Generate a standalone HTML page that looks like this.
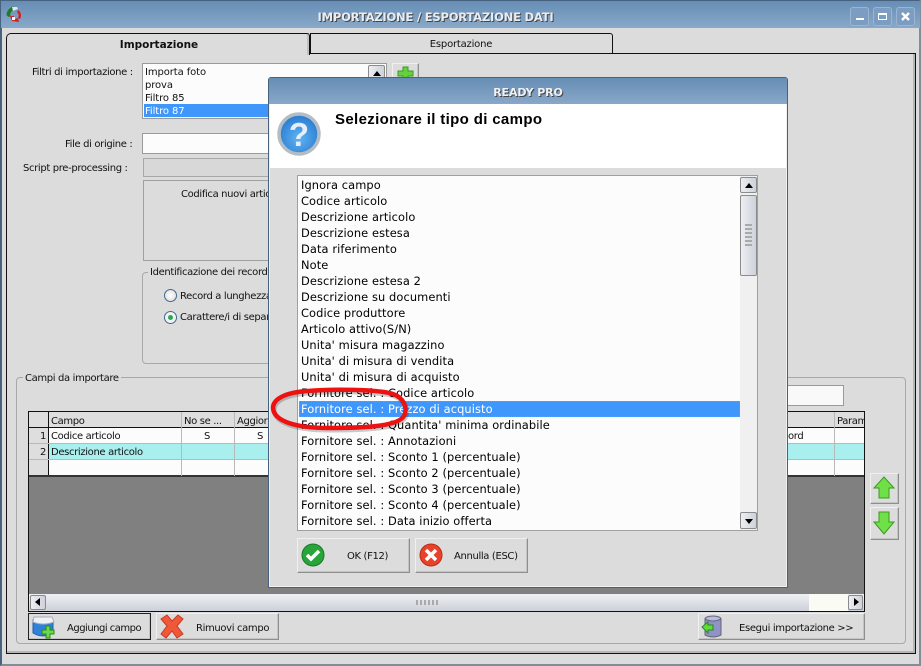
<!DOCTYPE html>
<html><head><meta charset="utf-8"><style>
html,body{margin:0;padding:0;width:921px;height:666px;overflow:hidden;background:#dcdcdc;font-family:"DejaVu Sans","Liberation Sans",sans-serif;font-size:10px;color:#111}
div,span,svg{position:absolute;box-sizing:border-box}
.t{white-space:nowrap;line-height:16px;height:16px;letter-spacing:-.35px;margin-top:1px}
.f{letter-spacing:-.1px}
.tb{background:linear-gradient(#678db5,#88a8c8)}
.btn{background:#dcdcdc;border:1px solid;border-color:#f0f0f0 #8e8e8e #8e8e8e #f0f0f0;box-shadow:inset -1px -1px 0 #c4c4c4}
.wb{top:7px;width:19px;height:19px;border:1px solid #9bb5d0;border-radius:3px;background:#7b9dc1}
.sb{background:linear-gradient(90deg,#eceef2,#cfd2db);border:1px solid #8b8b8b;border-radius:2px}
.row{left:301px;font-size:11.4px;color:#000;letter-spacing:.1px;margin-top:0}
.g{background:#b9b9b9}
</style></head><body>
<div style="left:0;top:0;width:921px;height:666px;border:1px solid #46627f;border-width:1px 2px 2px 2px;border-color:#46627f #7f8d9b #7f8d9b #46627f"></div>
<div class="tb" style="left:1px;top:1px;width:919px;height:27px"></div>
<svg style="left:6px;top:6px" width="16" height="17" viewBox="0 0 16 17"><path d="M8 0.5C4 1 1 4 0.5 9l2 2 2-1C4 7 5 5 8 4z" fill="#1f7a2c"/><path d="M6 1l5 0 1 2-5 2z" fill="#e4e4e4"/><path d="M12 4c3 2 4 6 2 9l-2-1c1-2 1-4-1-6z" fill="#e01818"/><path d="M4 10l2 5 7 1-1-4-3 1-1-3z" fill="#d82020"/><path d="M6 11h3v3H6z" fill="#fff"/></svg>
<div class="t" style="left:0;width:871px;top:8px;text-align:center;font:bold 11.5px/16px 'DejaVu Sans',sans-serif;letter-spacing:-.2px;color:#e8edf3;text-shadow:1px 1px 0 #444">IMPORTAZIONE / ESPORTAZIONE DATI</div>
<div class="wb" style="left:850px"><div style="left:5px;top:10px;width:8px;height:2px;background:#fff"></div></div>
<div class="wb" style="left:873px"><div style="left:4px;top:5px;width:9px;height:7px;border:1px solid #fff;border-top-width:2px"></div></div>
<div class="wb" style="left:896px"><svg style="left:4px;top:4px" width="9" height="9"><path d="M1 1l7 7M8 1L1 8" stroke="#fff" stroke-width="2.4"/></svg></div>

<!-- tab panel -->
<div style="left:6px;top:53px;width:910px;height:601px;border:1px solid #111;box-shadow:inset -2px -2px 0 #b5b5b5"></div>
<div style="left:6px;top:33px;width:304px;height:22px;background:#dcdcdc;border:1px solid #111;border-bottom:0;border-radius:5px 3px 0 0;box-shadow:inset -2px 0 0 #c0c0c0"></div>
<div style="left:310px;top:33px;width:303px;height:21px;background:#dcdcdc;border:1px solid #111;border-radius:0 3px 0 0"></div>
<div class="t" style="left:7px;width:304px;top:36px;text-align:center;font-weight:bold;font-size:10.5px;letter-spacing:0">Importazione</div>
<div class="t" style="left:310px;width:302px;top:36px;text-align:center;letter-spacing:-.2px">Esportazione</div>

<!-- left form -->
<div class="t" style="left:32px;top:64px">Filtri di importazione :</div>
<div style="left:142px;top:63px;width:245px;height:56px;background:#fcfcfc;border:1px solid #9a9a9a"></div>
<div class="t f" style="left:145px;top:64px">Importa foto</div>
<div class="t f" style="left:145px;top:77px">prova</div>
<div class="t f" style="left:145px;top:90px">Filtro 85</div>
<div style="left:144px;top:104px;width:240px;height:13px;background:#3f97fb"></div>
<div class="t f" style="left:145px;top:103px;color:#fff">Filtro 87</div>
<div class="sb" style="left:368px;top:65px;width:17px;height:16px"><div style="left:4px;top:5px;border:4px solid transparent;border-bottom:5px solid #000;border-top:0"></div></div>
<div class="btn" style="left:392px;top:63px;width:27px;height:24px"></div>
<svg style="left:397px;top:66px" width="18" height="16"><path d="M6 1h5v4h5v5h-5v5H6v-5H1V5h5z" fill="#63d23e" stroke="#3a9a22"/></svg>
<div class="t" style="left:65px;top:136px">File di origine :</div>
<div style="left:142px;top:133px;width:140px;height:21px;background:#fcfcfc;border:1px solid #9a9a9a"></div>
<div class="t" style="left:23px;top:160px">Script pre-processing :</div>
<div style="left:143px;top:158px;width:140px;height:19px;background:#d8d8d8;border:1px solid #a8a8a8"></div>
<div style="left:143px;top:180px;width:140px;height:81px;border:1px solid #a0a0a0;border-width:1px 0 1px 1px"></div>
<div class="t" style="left:181px;top:186px">Codifica nuovi articoli</div>
<div style="left:142px;top:272px;width:140px;height:92px;border:1px solid #a8a8a8;border-radius:4px"></div>
<div class="t" style="left:148px;top:264px;background:#dcdcdc;padding:0 2px;width:135px">Identificazione dei record</div>
<div style="left:164px;top:289px;width:13px;height:13px;border-radius:50%;border:1px solid #3f6a94;background:radial-gradient(#fff,#d8d8d8)"></div>
<div class="t" style="left:180px;top:288px;width:90px;overflow:hidden">Record a lunghezza</div>
<div style="left:164px;top:311px;width:13px;height:13px;border-radius:50%;border:1px solid #3f6a94;background:#f2f2f2"><div style="left:3px;top:3px;width:5px;height:5px;border-radius:50%;background:#2fa84f"></div></div>
<div class="t" style="left:180px;top:309px;width:90px;overflow:hidden">Carattere/i di separazione</div>

<!-- group -->
<div style="left:16px;top:377px;width:890px;height:267px;border:1px solid #a8a8a8;border-radius:4px"></div>
<div class="t" style="left:23px;top:370px;background:#dcdcdc;padding:0 2px">Campi da importare</div>
<div style="left:780px;top:385px;width:64px;height:21px;background:#f9f9f9;border:1px solid #9a9a9a"></div>

<!-- grid -->
<div style="left:28px;top:411px;width:837px;height:201px;background:#808080;border:1px solid #111"></div>
<div style="left:29px;top:412px;width:835px;height:15px;background:#dedede"></div>
<div style="left:29px;top:427px;width:835px;height:1px;background:#111"></div>
<div style="left:29px;top:428px;width:835px;height:48px;background:#fcfcfc"></div>
<div style="left:49px;top:444px;width:815px;height:16px;background:#a9efee"></div>
<div style="left:29px;top:428px;width:19px;height:48px;background:#dedede"></div>
<div style="left:48px;top:412px;width:1px;height:64px;background:#111"></div>
<div class="g" style="left:29px;top:443px;width:835px;height:1px"></div>
<div class="g" style="left:29px;top:459px;width:835px;height:1px"></div>
<div style="left:29px;top:475px;width:835px;height:2px;background:#333"></div>
<div class="g" style="left:181px;top:412px;width:1px;height:64px"></div>
<div class="g" style="left:234px;top:412px;width:1px;height:64px"></div>
<div class="g" style="left:834px;top:412px;width:1px;height:64px"></div>
<div class="t" style="left:51px;top:413px">Campo</div>
<div class="t" style="left:184px;top:413px">No se ...</div>
<div class="t" style="left:237px;top:413px;width:32px;overflow:hidden">Aggior</div>
<div class="t" style="left:837px;top:413px;width:27px;overflow:hidden">Param</div>
<div class="t" style="left:40px;top:428px">1</div><div class="t" style="left:40px;top:444px">2</div>
<div class="t" style="left:51px;top:428px">Codice articolo</div>
<div class="t" style="left:51px;top:444px">Descrizione articolo</div>
<div class="t" style="left:204px;top:428px">S</div><div class="t" style="left:257px;top:428px">S</div>
<div class="t" style="left:788px;top:428px">ord</div>
<!-- h scroll -->
<div style="left:29px;top:594px;width:835px;height:17px;background:linear-gradient(#eef0f3,#cdd0d9)"></div>
<div style="left:809px;top:594px;width:39px;height:17px;background:#fbfbf6"></div>
<div class="sb" style="left:30px;top:595px;width:16px;height:15px"><div style="left:4px;top:2px;border:4px solid transparent;border-right:5px solid #000;border-left:0"></div></div>
<div class="sb" style="left:848px;top:595px;width:15px;height:15px"><div style="left:5px;top:2px;border:4px solid transparent;border-left:5px solid #000;border-right:0"></div></div>
<div style="left:416px;top:600px;width:24px;height:5px;background:repeating-linear-gradient(90deg,#aaa 0 2px,transparent 2px 4px)"></div>

<!-- side arrows -->
<div class="btn" style="left:870px;top:473px;width:29px;height:31px"></div>
<svg style="left:873px;top:476px" width="22" height="24"><path d="M11 1l10 11h-5v10H6V12H1z" fill="#6fe047" stroke="#3a9a22"/></svg>
<div class="btn" style="left:870px;top:507px;width:29px;height:33px"></div>
<svg style="left:873px;top:511px" width="22" height="24"><path d="M6 1h10v10h5L11 23 1 11h5z" fill="#6fe047" stroke="#3a9a22"/></svg>

<!-- bottom buttons -->
<div class="btn" style="left:28px;top:613px;width:123px;height:27px;outline:1px solid #222;outline-offset:-1px"></div>
<svg style="left:31px;top:615px" width="26" height="24"><path d="M2 5h20v13q-10 6-20 0z" fill="#2f82d8" stroke="#1c5ea8"/><path d="M3 2h18l2 5q-11 4-21 0z" fill="#eef2f7" stroke="#aab"/><path d="M15 11h4v4h4v4h-4v4h-4v-4h-4v-4h4z" fill="#6fd84a" stroke="#2a8a1a"/></svg>
<div class="t" style="left:67px;top:620px;letter-spacing:-.5px">Aggiungi campo</div>
<div class="btn" style="left:156px;top:613px;width:123px;height:27px"></div>
<svg style="left:160px;top:614px" width="24" height="25"><path d="M1 5l6-4 5 6 6-6 5 4-6 7 6 8-6 4-5-7-6 7-5-4 6-8z" fill="#f0583a" stroke="#c83a20"/></svg>
<div class="t" style="left:196px;top:620px">Rimuovi campo</div>
<div class="btn" style="left:698px;top:613px;width:167px;height:27px"></div>
<svg style="left:701px;top:615px" width="22" height="24"><ellipse cx="12" cy="4" rx="8" ry="3" fill="#b9bce0" stroke="#667"/><path d="M4 4v16q8 4 16 0V4q-8 4-16 0z" fill="#8f93c7" stroke="#667"/><path d="M1 12l6-5v3h5v5H7v3z" fill="#5fdc3c" stroke="#2a8a1a"/></svg>
<div class="t" style="left:739px;top:620px">Esegui importazione &gt;&gt;</div>

<!-- dialog -->
<div style="left:268px;top:77px;width:520px;height:511px;background:#dcdcdc;border:1px solid #46627f;border-radius:3px 3px 0 0;box-shadow:inset -1px -1px 0 #eef1f4,inset 1px 0 0 #eef1f4"></div>
<div class="tb" style="left:269px;top:78px;width:518px;height:26px"></div>
<div class="t" style="left:269px;width:518px;top:84px;text-align:center;font:bold 11px/16px 'DejaVu Sans',sans-serif;letter-spacing:-.1px;color:#eef2f6;text-shadow:1px 1px 0 #444">READY PRO</div>
<div style="left:270px;top:104px;width:516px;height:64px;background:#fff"></div>
<svg style="left:277px;top:112px" width="46" height="46" viewBox="0 0 46 46"><defs><radialGradient id="q" cx=".5" cy=".6" r=".6"><stop offset="0" stop-color="#5fb4f2"/><stop offset="1" stop-color="#2878cf"/></radialGradient></defs><circle cx="22" cy="22" r="20" fill="url(#q)" stroke="#b4bcc4" stroke-width="3.5"/><text x="22" y="34" text-anchor="middle" font-family="Liberation Sans" font-weight="bold" font-size="33" fill="#e6eefc">?</text></svg>
<div class="t" style="left:335px;top:110px;font:bold 15px/18px 'Liberation Sans',sans-serif;color:#000;height:18px;letter-spacing:.35px">Selezionare il tipo di campo</div>

<div style="left:297px;top:175px;width:461px;height:356px;background:#fcfcfc;border:1px solid #a0a0a0"></div>
<div style="left:299px;top:401px;width:441px;height:16px;background:#3f97fb;border:1px dotted #c98a3a"></div>
<div class="t row" style="top:177px">Ignora campo</div>
<div class="t row" style="top:193px">Codice articolo</div>
<div class="t row" style="top:209px">Descrizione articolo</div>
<div class="t row" style="top:225px">Descrizione estesa</div>
<div class="t row" style="top:241px">Data riferimento</div>
<div class="t row" style="top:257px">Note</div>
<div class="t row" style="top:273px">Descrizione estesa 2</div>
<div class="t row" style="top:289px">Descrizione su documenti</div>
<div class="t row" style="top:305px">Codice produttore</div>
<div class="t row" style="top:321px">Articolo attivo(S/N)</div>
<div class="t row" style="top:337px">Unita' misura magazzino</div>
<div class="t row" style="top:353px">Unita' di misura di vendita</div>
<div class="t row" style="top:369px">Unita' di misura di acquisto</div>
<div class="t row" style="top:385px">Fornitore sel. : Codice articolo</div>
<div class="t row" style="top:401px;color:#fff">Fornitore sel. : Prezzo di acquisto</div>
<div class="t row" style="top:417px">Fornitore sel. : Quantita' minima ordinabile</div>
<div class="t row" style="top:433px">Fornitore sel. : Annotazioni</div>
<div class="t row" style="top:449px">Fornitore sel. : Sconto 1 (percentuale)</div>
<div class="t row" style="top:465px">Fornitore sel. : Sconto 2 (percentuale)</div>
<div class="t row" style="top:481px">Fornitore sel. : Sconto 3 (percentuale)</div>
<div class="t row" style="top:497px">Fornitore sel. : Sconto 4 (percentuale)</div>
<div class="t row" style="top:513px">Fornitore sel. : Data inizio offerta</div>
<!-- dialog scrollbar -->
<div style="left:740px;top:176px;width:17px;height:354px;background:#f0f0f0"></div>
<div class="sb" style="left:740px;top:177px;width:17px;height:16px"><div style="left:4px;top:5px;border:4px solid transparent;border-bottom:5px solid #000;border-top:0"></div></div>
<div class="sb" style="left:740px;top:195px;width:17px;height:81px"></div>
<div style="left:745px;top:224px;width:7px;height:22px;background:repeating-linear-gradient(#aaa 0 2px,transparent 2px 4px)"></div>
<div class="sb" style="left:740px;top:512px;width:17px;height:17px"><div style="left:4px;top:6px;border:4px solid transparent;border-top:5px solid #000;border-bottom:0"></div></div>
<!-- dialog buttons -->
<div class="btn" style="left:297px;top:538px;width:113px;height:35px"></div>
<svg style="left:301px;top:543px" width="24" height="24"><circle cx="12" cy="12" r="11" fill="#28a53a" stroke="#157a25"/><path d="M6 12l4 4 8-8" fill="none" stroke="#fff" stroke-width="3.5"/></svg>
<div class="t" style="left:347px;top:548px">OK (F12)</div>
<div class="btn" style="left:415px;top:538px;width:113px;height:35px"></div>
<svg style="left:419px;top:543px" width="24" height="24"><circle cx="12" cy="12" r="11" fill="#e8432a" stroke="#b82c18"/><path d="M7 7l10 10M17 7L7 17" stroke="#fff" stroke-width="3.5"/></svg>
<div class="t" style="left:454px;top:548px">Annulla (ESC)</div>

<!-- red ellipse -->
<svg style="left:268px;top:384px" width="146" height="52"><path d="M40 7C60 5 110 5 125 10C136 14 140 24 136 32C130 42 100 44 60 44C30 44 6 38 5 24C5 14 20 8 40 7Z" fill="none" stroke="#000" stroke-opacity=".2" stroke-width="5" transform="translate(1,2)"/><path d="M40 7C60 5 110 5 125 10C136 14 140 24 136 32C130 42 100 44 60 44C30 44 6 38 5 24C5 14 20 8 40 7Z" fill="none" stroke="#ee1111" stroke-width="4.5"/></svg>
</body></html>
